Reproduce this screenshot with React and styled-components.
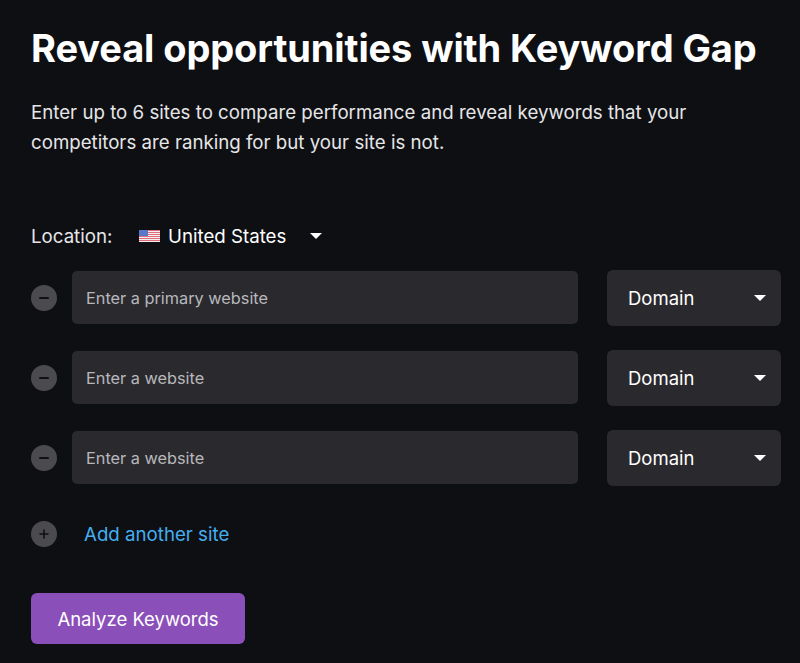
import React from "react";
import styled, { createGlobalStyle } from "styled-components";

const G = createGlobalStyle`
  body{margin:0;background:#0e0f13;font-family:Inter,"Noto Sans",sans-serif;color:#fff;}
`;
const Page = styled.div`padding:22px 0 0 31px;height:663px;box-sizing:border-box;`;
const Title = styled.h1`margin:0;font-size:38px;font-weight:700;letter-spacing:-0.1px;line-height:52px;white-space:nowrap;`;
const Desc = styled.p`margin:24px 0 0;font-size:18.7px;line-height:30px;color:#e6e6e8;max-width:700px;`;
const LocRow = styled.div`display:flex;align-items:center;margin-top:63px;font-size:18.7px;height:30px;`;
const LocLabel = styled.span`width:108px;color:#e6e6e8;`;
const Country = styled.span`display:flex;align-items:center;gap:8px;`;
const Caret = styled.span`display:inline-block;width:0;height:0;border-left:6px solid transparent;border-right:6px solid transparent;border-top:6px solid #fff;margin-left:${p=>p.$ml||0}px;`;
const Rows = styled.div`display:flex;flex-direction:column;gap:27px;margin-top:20px;`;
const Row = styled.div`display:flex;align-items:center;height:53px;`;
const Circle = styled.div`width:26px;height:26px;border-radius:50%;background:#4b4b4f;display:flex;align-items:center;justify-content:center;margin:0 15px 0 0;flex:none;`;
const Input = styled.div`flex:none;width:506px;height:53px;border-radius:5px;background:#2a2a2e;display:flex;align-items:center;padding-left:14px;box-sizing:border-box;font-size:16.3px;color:#b8b8bc;`;
const Select = styled.div`margin-left:29px;width:174px;height:56px;border-radius:6px;background:#2a2a2e;display:flex;align-items:center;justify-content:space-between;padding:0 15px 0 21px;box-sizing:border-box;font-size:18.5px;color:#fff;`;
const AddRow = styled.div`display:flex;align-items:center;margin-top:35px;height:30px;`;
const Link = styled.span`color:#44aef0;font-size:18.7px;margin-left:12px;`;
const Button = styled.button`margin-top:44px;width:214px;height:51px;border:none;border-radius:6px;background:#8b4fb9;color:#fff;font-family:inherit;font-size:18.5px;`;

const Minus = () => <svg width="12" height="12" viewBox="0 0 12 12"><path d="M2 6h8" stroke="#111" strokeWidth="2" strokeLinecap="round"/></svg>;
const Plus = () => <svg width="12" height="12" viewBox="0 0 12 12"><path d="M2 6h8M6 2v8" stroke="#111" strokeWidth="1.6" strokeLinecap="round"/></svg>;
const Flag = () => (
  <svg width="21" height="12" viewBox="0 0 21 12">
    {[0,1,2,3,4,5].map(i=><rect key={i} x="0" y={i*2} width="21" height="1" fill="#e06a78"/>)}
    {[0,1,2,3,4,5].map(i=><rect key={"w"+i} x="0" y={i*2+1} width="21" height="1" fill="#f4eef0"/>)}
    <rect x="0" y="0" width="9" height="6" fill="#5a78c8"/>
  </svg>
);

const rows = ["Enter a primary website","Enter a website","Enter a website"];

export default function App(){
  return <Page><G/>
    <Title>Reveal opportunities with Keyword Gap</Title>
    <Desc>Enter up to 6 sites to compare performance and reveal keywords that your competitors are ranking for but your site is not.</Desc>
    <LocRow><LocLabel>Location:</LocLabel><Country><Flag/>United States</Country><Caret $ml={24}/></LocRow>
    <Rows>{rows.map((r,i)=><Row key={i}>
      <Circle><Minus/></Circle>
      <Input>{r}</Input>
      <Select>Domain<Caret/></Select>
    </Row>)}</Rows>
    <AddRow><Circle><Plus/></Circle><Link>Add another site</Link></AddRow>
    <Button>Analyze Keywords</Button>
  </Page>;
}
